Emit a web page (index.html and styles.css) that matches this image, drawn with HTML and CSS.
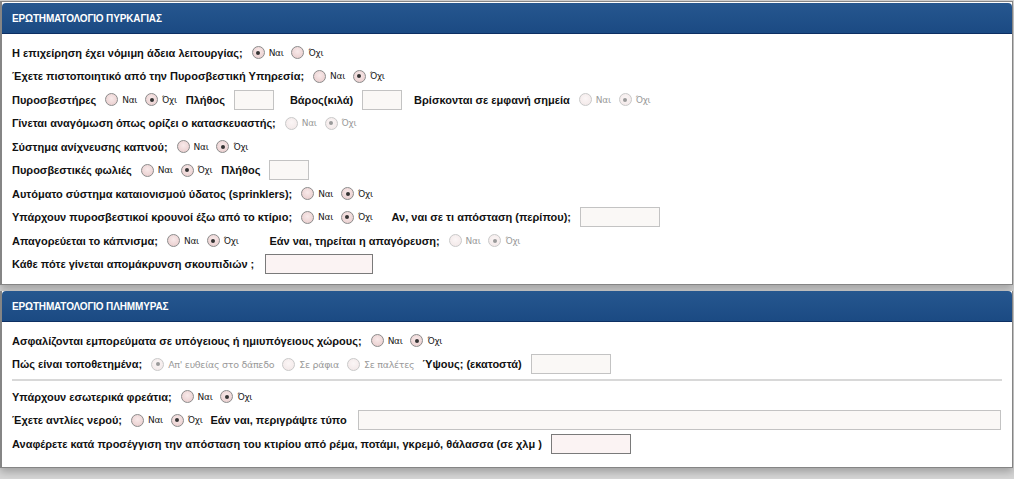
FILE: index.html
```html
<!DOCTYPE html>
<html lang="el">
<head>
<meta charset="utf-8">
<title>Ερωτηματολόγιο</title>
<link rel="stylesheet" href="styles.css">
</head>
<body>
<div class="frame">
  <section class="panel panel-fire">
    <div class="panel-head">ΕΡΩΤΗΜΑΤΟΛΟΓΙΟ ΠΥΡΚΑΓΙΑΣ</div>
    <div class="panel-body">
      <div class="row">
        <span class="lbl">Η επιχείρηση έχει νόμιμη άδεια λειτουργίας;</span>
        <span class="opt"><span class="radio on"></span><span class="otxt">Ναι</span></span>
        <span class="opt"><span class="radio"></span><span class="otxt">Όχι</span></span>
      </div>
      <div class="row">
        <span class="lbl">Έχετε πιστοποιητικό από την Πυροσβεστική Υπηρεσία;</span>
        <span class="opt"><span class="radio"></span><span class="otxt">Ναι</span></span>
        <span class="opt"><span class="radio on"></span><span class="otxt">Όχι</span></span>
      </div>
      <div class="row">
        <span class="lbl">Πυροσβεστήρες</span>
        <span class="opt"><span class="radio"></span><span class="otxt">Ναι</span></span>
        <span class="opt"><span class="radio on"></span><span class="otxt">Όχι</span></span>
        <span class="lbl sp1">Πλήθος</span>
        <span class="field w40"></span>
        <span class="lbl sp2">Βάρος(κιλά)</span>
        <span class="field w40"></span>
        <span class="lbl sp5">Βρίσκονται σε εμφανή σημεία</span>
        <span class="opt off"><span class="radio"></span><span class="otxt">Ναι</span></span>
        <span class="opt off"><span class="radio on"></span><span class="otxt">Όχι</span></span>
      </div>
      <div class="row">
        <span class="lbl">Γίνεται αναγόμωση όπως ορίζει ο κατασκευαστής;</span>
        <span class="opt off"><span class="radio"></span><span class="otxt">Ναι</span></span>
        <span class="opt off"><span class="radio on"></span><span class="otxt">Όχι</span></span>
      </div>
      <div class="row">
        <span class="lbl">Σύστημα ανίχνευσης καπνού;</span>
        <span class="opt"><span class="radio"></span><span class="otxt">Ναι</span></span>
        <span class="opt"><span class="radio on"></span><span class="otxt">Όχι</span></span>
      </div>
      <div class="row">
        <span class="lbl">Πυροσβεστικές φωλιές</span>
        <span class="opt"><span class="radio"></span><span class="otxt">Ναι</span></span>
        <span class="opt"><span class="radio on"></span><span class="otxt">Όχι</span></span>
        <span class="lbl sp1">Πλήθος</span>
        <span class="field w40"></span>
      </div>
      <div class="row">
        <span class="lbl">Αυτόματο σύστημα καταιονισμού ύδατος (sprinklers);</span>
        <span class="opt"><span class="radio"></span><span class="otxt">Ναι</span></span>
        <span class="opt"><span class="radio on"></span><span class="otxt">Όχι</span></span>
      </div>
      <div class="row">
        <span class="lbl">Υπάρχουν πυροσβεστικοί κρουνοί έξω από το κτίριο;</span>
        <span class="opt"><span class="radio"></span><span class="otxt">Ναι</span></span>
        <span class="opt"><span class="radio on"></span><span class="otxt">Όχι</span></span>
        <span class="lbl sp3">Αν, ναι σε τι απόσταση (περίπου);</span>
        <span class="field w80"></span>
      </div>
      <div class="row">
        <span class="lbl">Απαγορεύεται το κάπνισμα;</span>
        <span class="opt"><span class="radio"></span><span class="otxt">Ναι</span></span>
        <span class="opt"><span class="radio on"></span><span class="otxt">Όχι</span></span>
        <span class="lbl sp4">Εάν ναι, τηρείται η απαγόρευση;</span>
        <span class="opt off"><span class="radio"></span><span class="otxt">Ναι</span></span>
        <span class="opt off"><span class="radio on"></span><span class="otxt">Όχι</span></span>
      </div>
      <div class="row">
        <span class="lbl">Κάθε πότε γίνεται απομάκρυνση σκουπιδιών ;</span>
        <span class="field dark w108 sp6"></span>
      </div>
    </div>
  </section>

  <section class="panel panel-flood">
    <div class="panel-head">ΕΡΩΤΗΜΑΤΟΛΟΓΙΟ ΠΛΗΜΜΥΡΑΣ</div>
    <div class="panel-body">
      <div class="row">
        <span class="lbl">Ασφαλίζονται εμπορεύματα σε υπόγειους ή ημιυπόγειους χώρους;</span>
        <span class="opt"><span class="radio"></span><span class="otxt">Ναι</span></span>
        <span class="opt"><span class="radio on"></span><span class="otxt">Όχι</span></span>
      </div>
      <div class="row">
        <span class="lbl">Πώς είναι τοποθετημένα;</span>
        <span class="opt off"><span class="radio on"></span><span class="otxt wide">Απ' ευθείας στο δάπεδο</span></span>
        <span class="opt off"><span class="radio"></span><span class="otxt wide">Σε ράφια</span></span>
        <span class="opt off"><span class="radio"></span><span class="otxt wide">Σε παλέτες</span></span>
        <span class="lbl">Ύψους; (εκατοστά)</span>
        <span class="field w80"></span>
      </div>
      <div class="sep"></div>
      <div class="row">
        <span class="lbl">Υπάρχουν εσωτερικά φρεάτια;</span>
        <span class="opt"><span class="radio"></span><span class="otxt">Ναι</span></span>
        <span class="opt"><span class="radio on"></span><span class="otxt">Όχι</span></span>
      </div>
      <div class="row">
        <span class="lbl">Έχετε αντλίες νερού;</span>
        <span class="opt"><span class="radio"></span><span class="otxt">Ναι</span></span>
        <span class="opt"><span class="radio on"></span><span class="otxt">Όχι</span></span>
        <span class="lbl">Εάν ναι, περιγράψτε τύπο</span>
        <span class="field grow sp6"></span>
      </div>
      <div class="row">
        <span class="lbl">Αναφέρετε κατά προσέγγιση την απόσταση του κτιρίου από ρέμα, ποτάμι, γκρεμό, θάλασσα (σε χλμ )</span>
        <span class="field dark w80"></span>
      </div>
    </div>
  </section>
</div>
</body>
</html>
```

FILE: styles.css
```css
* { box-sizing: border-box; }

html, body {
  margin: 0;
  padding: 0;
}

body {
  width: 1014px;
  height: 479px;
  overflow: hidden;
  background: #d6d6d6;
  font-family: "Liberation Sans", Arial, sans-serif;
  color: #111;
}

.frame {
  width: 1013px;
  padding-top: 1px;
}

.panel {
  background: #fff;
  border: 1px solid #858585;
  border-left-width: 2px;
  width: 1013px;
  box-shadow: 0 4px 8px rgba(0, 0, 0, 0.25);
}

.panel-fire {
  height: 284px;
}

.panel-flood {
  margin-top: 6px;
  height: 177px;
  border-top: none;
}

.panel-head {
  height: 31px;
  margin: 1px 0 0 0;
  border-radius: 4px 4px 0 0;
  background: linear-gradient(#26578f, #1b4a83);
  border-bottom: 1px solid #0d2f63;
  color: #fff;
  font-weight: bold;
  font-size: 10px;
  letter-spacing: -0.15px;
  line-height: 31px;
  padding-left: 10px;
}

.panel-flood .panel-head {
  margin-top: 0;
}

.panel-body {
  padding: 7px 10px 0 10px;
}

.row {
  display: flex;
  align-items: center;
  height: 23.5px;
  gap: 9px;
  white-space: nowrap;
}

.lbl {
  font-weight: bold;
  font-size: 11px;
}

.sp1 { margin-left: 1px; }
.sp2 { margin-left: 7px; }
.sp3 { margin-left: 11px; }
.sp4 { margin-left: 23px; }
.sp5 { margin-left: 3px; }
.sp6 { margin-left: 2px; }

.opt {
  display: inline-flex;
  align-items: center;
  gap: 4px;
  margin-right: -1px;
}

.radio {
  width: 13px;
  height: 13px;
  border-radius: 50%;
  border: 1px solid #8c8c8c;
  background: radial-gradient(circle at 50% 40%, #f8eaea 0%, #ecd3d3 70%, #e3c4c4 100%);
  position: relative;
  flex: none;
}

.radio.on::after {
  content: "";
  position: absolute;
  left: 3.5px;
  top: 3.5px;
  width: 4px;
  height: 4px;
  border-radius: 50%;
  background: #333;
}

.otxt {
  font-size: 9px;
  color: #222;
  font-family: "DejaVu Sans", Verdana, sans-serif;
  letter-spacing: -0.3px;
}

.otxt.wide {
  font-size: 9.5px;
}

.opt.off .radio {
  border-color: #c9c9c9;
  background: radial-gradient(circle at 50% 40%, #fbf6f6 0%, #f3e9e9 80%);
}

.opt.off .radio.on::after {
  background: #9a9a9a;
}

.opt.off .otxt {
  color: #9a9a9a;
}

.field {
  height: 20px;
  border: 1px solid #c3c3c3;
  background: #faf8f6;
  flex: none;
}

.field.dark {
  border-color: #7a7a7a;
  background: #fbf3f3;
}

.w40 { width: 40px; }
.w80 { width: 80px; }
.w108 { width: 108px; }

.field.grow {
  flex: 1;
  height: 20px;
  margin-right: 1px;
}

.sep {
  height: 2px;
  background: #d8d8d8;
  margin: 3px 0 4px 0;
}
```
